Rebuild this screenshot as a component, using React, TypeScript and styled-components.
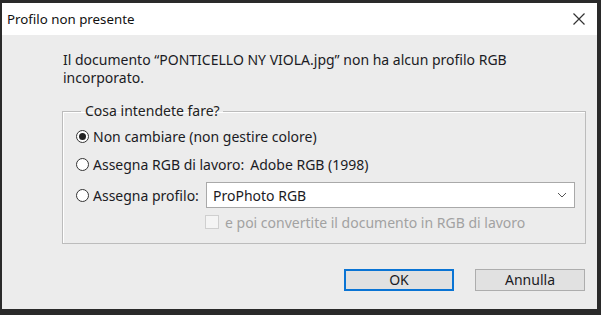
import React from 'react'
import styled, { createGlobalStyle } from 'styled-components'

const GlobalStyle = createGlobalStyle`
  html, body {
    margin: 0;
    padding: 0;
    background: #1f1f1f;
  }
  * {
    box-sizing: border-box;
  }
`

const font = `'Noto Sans', 'Open Sans', sans-serif`

const Window = styled.div`
  width: 601px;
  height: 315px;
  display: flex;
  flex-direction: column;
  border-style: solid;
  border-color: #2a2a2a;
  border-width: 3px 4px 6px 2px;
  background: #ececec;
  font-family: ${font};
  font-size: 14px;
  color: #1b1b24;
`

const TitleBar = styled.div`
  height: 32px;
  flex-shrink: 0;
  display: flex;
  align-items: center;
  justify-content: space-between;
  padding: 0 11px 0 5px;
  background: #ffffff;
  font-size: 13.3px;
  color: #111;
`

const CloseButton = styled.button`
  width: 14px;
  height: 14px;
  padding: 0;
  border: 0;
  background: transparent;
  display: flex;
  align-items: center;
  justify-content: center;
`

const Body = styled.div`
  flex: 1;
  display: flex;
  flex-direction: column;
  padding: 16px 11px 0 61px;
`

const Message = styled.p`
  margin: 0;
  line-height: 18px;
`

const Group = styled.fieldset`
  margin: 15px 0 0 -1px;
  padding: 4px 10px 7px 13px;
  border: 1px solid #bcbcbc;
  box-shadow: inset 1px 1px 0 #fff;
  min-width: 0;
`

const Legend = styled.legend`
  margin-left: 5px;
  padding: 0 3px 0 4px;
  line-height: 18px;
  color: #222;
`

const Row = styled.div<{ gap?: number }>`
  height: 24px;
  margin-top: ${p => p.gap ?? 0}px;
  display: flex;
  align-items: center;
`

const ProfileGrid = styled.div`
  margin-top: 6px;
  display: grid;
  grid-template-columns: 130px 1fr;
  grid-template-rows: 26px 28px;
  align-items: center;
`

const Radio = styled.span<{ checked?: boolean }>`
  width: 13px;
  height: 13px;
  flex-shrink: 0;
  border-radius: 50%;
  border: 1px solid #333;
  background: #fff;
  margin-right: 4px;
  display: flex;
  align-items: center;
  justify-content: center;

  &::after {
    content: '';
    width: 7px;
    height: 7px;
    border-radius: 50%;
    background: ${p => (p.checked ? '#222' : 'transparent')};
  }
`

const Label = styled.span`
  white-space: nowrap;
  display: flex;
  align-items: center;
`

const Value = styled.span`
  margin-left: 6px;
`

const Select = styled.div`
  height: 26px;
  display: flex;
  align-items: center;
  justify-content: space-between;
  padding: 0 7px 0 6px;
  border: 1px solid #a9a9a9;
  background: #fff;
`

const CheckRow = styled.div`
  grid-column: 2;
  display: flex;
  align-items: center;
  color: #a2a2a2;
  margin-left: -1px;
  white-space: nowrap;
`

const Checkbox = styled.span`
  width: 14px;
  height: 14px;
  border: 1px solid #cfcfcf;
  background: #f4f4f4;
  margin-right: 6px;
`

const Footer = styled.div`
  margin-top: 25px;
  display: flex;
  justify-content: flex-end;
  gap: 21px;
  padding-right: 1px;
`

const Button = styled.button<{ primary?: boolean }>`
  width: 110px;
  height: 22px;
  padding: 0;
  font-family: ${font};
  font-size: 14px;
  line-height: 18px;
  color: #1b1b24;
  background: #e1e1e1;
  border: ${p => (p.primary ? '2px solid #0a74d4' : '1px solid #adadad')};
`

const Chevron = () => (
  <svg width="10" height="6" viewBox="0 0 10 6">
    <path d="M1 1 L5 5 L9 1" fill="none" stroke="#555" strokeWidth="1" />
  </svg>
)

const CloseIcon = () => (
  <svg width="12" height="12" viewBox="0 0 12 12">
    <path d="M0.5 0.5 L11.5 11.5 M11.5 0.5 L0.5 11.5" stroke="#333" strokeWidth="1.2" />
  </svg>
)

export default function App() {
  return (
    <>
      <GlobalStyle />
      <Window>
        <TitleBar>
          <span>Profilo non presente</span>
          <CloseButton>
            <CloseIcon />
          </CloseButton>
        </TitleBar>
        <Body>
          <Message>
            Il documento “PONTICELLO NY VIOLA.jpg” non ha alcun profilo RGB
            <br />
            incorporato.
          </Message>
          <Group>
            <Legend>Cosa intendete fare?</Legend>
            <Row>
              <Label>
                <Radio checked />
                Non cambiare (non gestire colore)
              </Label>
            </Row>
            <Row gap={4}>
              <Label>
                <Radio />
                Assegna RGB di lavoro:
                <Value>Adobe RGB (1998)</Value>
              </Label>
            </Row>
            <ProfileGrid>
              <Label>
                <Radio />
                Assegna profilo:
              </Label>
              <Select>
                <span>ProPhoto RGB</span>
                <Chevron />
              </Select>
              <CheckRow>
                <Checkbox />
                e poi convertite il documento in RGB di lavoro
              </CheckRow>
            </ProfileGrid>
          </Group>
          <Footer>
            <Button primary>OK</Button>
            <Button>Annulla</Button>
          </Footer>
        </Body>
      </Window>
    </>
  )
}
